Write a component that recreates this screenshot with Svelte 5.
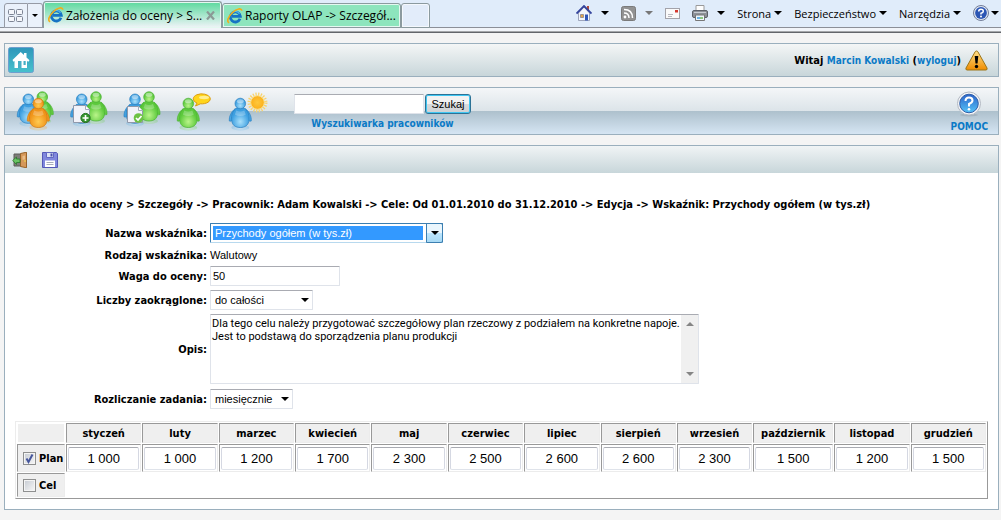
<script>
	const months = [
		{ name: 'styczeń', value: '1 000' },
		{ name: 'luty', value: '1 000' },
		{ name: 'marzec', value: '1 200' },
		{ name: 'kwiecień', value: '1 700' },
		{ name: 'maj', value: '2 300' },
		{ name: 'czerwiec', value: '2 500' },
		{ name: 'lipiec', value: '2 600' },
		{ name: 'sierpień', value: '2 600' },
		{ name: 'wrzesień', value: '2 300' },
		{ name: 'październik', value: '1 500' },
		{ name: 'listopad', value: '1 200' },
		{ name: 'grudzień', value: '1 500' }
	];

	let plan = months.map((month) => month.value);
	let weight = '50';
	let planChecked = true;
	let goalChecked = false;
	let search = '';
	let description =
		'Dla tego celu należy przygotować szczegółowy plan rzeczowy z podziałem na konkretne napoje.\nJest to podstawą do sporządzenia planu produkcji';
</script>

<svelte:head>
	<title>Założenia do oceny</title>
</svelte:head>

{#snippet arrow()}
	<svg class="arrow" width="8" height="4" viewBox="0 0 8 4"><path d="M0 0h8L4 4z" fill="currentColor" /></svg>
{/snippet}

{#snippet ie()}
	<svg width="16" height="16" viewBox="0 0 16 16">
		<path d="M13 10.800A5 5 0 1 1 13.300 8.300H5" fill="none" stroke="#1673c4" stroke-width="2.800" />
		<path d="M4 5.800a5 5 0 0 1 8.500 0" fill="none" stroke="#58bdf0" stroke-width="1.200" />
		<path d="M2.200 14.800C-.8 14 1.200 8.500 5.500 4.500S14.600-.2 14.800 2.800" fill="none" stroke="#f0ae1c" stroke-width="1.700" />
	</svg>
{/snippet}

{#snippet person(x, y, color)}
	<g transform="translate({x} {y})">
		<ellipse cx="0" cy="24" rx="9" ry="3" fill="url(#{color})" opacity="0.25" />
		<path d="M-5 5C-9 8-11.500 13-11 17.500q1.600 1 3-1L-5 9zM5 5c4 3 6.500 8 6 12.500q-1.600 1-3-1L5 9z" fill="url(#{color})" stroke="url(#{color}-edge)" stroke-width="0.6" />
		<path d="M-4 4.500C-8.500 9-9 12-8.700 16-8.500 22-4.500 24 0 24s8.500-2 8.700-8C9 12 8.500 9 4 4.500z" fill="url(#{color})" stroke="url(#{color}-edge)" stroke-width="0.7" />
		<circle r="5.300" fill="url(#{color})" stroke="url(#{color}-edge)" stroke-width="0.7" />
		<ellipse cx="0" cy="-2.200" rx="3.400" ry="2" fill="#fff" opacity="0.45" />
		<path d="M-4 7q4 2 8 0l1.500 4q-5.500 3-11 0z" fill="#fff" opacity="0.25" />
	</g>
{/snippet}

<svg class="defs" width="0" height="0" aria-hidden="true">
	<defs>
		<radialGradient id="blue" cy="0.7"><stop offset="0" stop-color="#a9e0fb" /><stop offset="1" stop-color="#3d9fe0" /></radialGradient>
		<linearGradient id="blue-edge"><stop stop-color="#2a7fc0" /></linearGradient>
		<radialGradient id="green" cy="0.7"><stop offset="0" stop-color="#baf48a" /><stop offset="1" stop-color="#5cc93c" /></radialGradient>
		<linearGradient id="green-edge"><stop stop-color="#4cb035" /></linearGradient>
		<radialGradient id="orange" cy="0.7"><stop offset="0" stop-color="#ffcb52" /><stop offset="1" stop-color="#f0941a" /></radialGradient>
		<linearGradient id="orange-edge"><stop stop-color="#cf7912" /></linearGradient>
		<linearGradient id="gold" x2="0" y2="1"><stop stop-color="#ffe08a" /><stop offset="1" stop-color="#f08c00" /></linearGradient>
		<radialGradient id="sun"><stop offset="0" stop-color="#ffc83c" /><stop offset="1" stop-color="#fbb01c" /></radialGradient>
		<linearGradient id="glass" x2="0" y2="1"><stop stop-color="#2b62c8" /><stop offset="1" stop-color="#55c4f8" /></linearGradient>
		<linearGradient id="tile" x2="0" y2="1"><stop stop-color="#2e96ba" /><stop offset="1" stop-color="#48c1cd" /></linearGradient>
	</defs>
</svg>

<header class="browser">
	<div class="tabs">
		<button type="button" class="quick" aria-label="Szybkie karty">
			<svg width="16" height="14" viewBox="0 0 16 14"><g fill="#f4f6fb" stroke="#7d8494"><rect x=".5" y=".5" width="6" height="5" rx="1" /><rect x="8.500" y=".5" width="6" height="5" rx="1" /><rect x=".5" y="7.500" width="6" height="5" rx="1" /><rect x="8.500" y="7.500" width="6" height="5" rx="1" /></g></svg>
		</button>
		<button type="button" class="quick list" aria-label="Lista kart">
			<svg width="6" height="3" viewBox="0 0 6 3"><path d="M0 0h6L3 3z" /></svg>
		</button>
		<button type="button" class="tab active">
			{@render ie()}
			<span>Założenia do oceny > S...</span>
			<svg class="close" width="9" height="9" viewBox="0 0 9 9"><path d="M1 .5l7 8M8 .5l-7 8" stroke="#8b9a96" stroke-width="2.200" /></svg>
		</button>
		<button type="button" class="tab">
			{@render ie()}
			<span>Raporty OLAP -> Szczegół...</span>
		</button>
		<button type="button" class="tab new" aria-label="Nowa karta"></button>
	</div>

	<nav class="commands">
		<button type="button" class="icon-cmd" aria-label="Strona główna">
			<svg width="16" height="16" viewBox="0 0 16 16">
				<path d="M11 1h2v5h-2z" fill="#b2493c" />
				<path d="M2.500 8L8 2l5.500 6v7.500h-11z" fill="#f3f5fb" stroke="#8a92ac" stroke-width=".8" />
				<path d="M.5 8.500L8 1l7.500 7.500" fill="none" stroke="#33439c" stroke-width="1.800" />
				<path d="M9 9.500h3v6H9z" fill="#2e55b8" /><path d="M4.500 9.500h3v3h-3z" fill="#e2a44b" stroke="#6b6b80" stroke-width=".6" />
			</svg>
			{@render arrow()}
		</button>
		<button type="button" class="icon-cmd muted" aria-label="Kanały">
			<svg width="15" height="15" viewBox="0 0 15 15">
				<rect x=".5" y=".5" width="14" height="14" rx="2" fill="#929292" stroke="#7a7a7a" />
				<circle cx="4" cy="11" r="1.400" fill="#fff" /><path d="M3 7q5 0 5 5M3 3.500q8.500 0 8.500 8.500" fill="none" stroke="#fff" stroke-width="1.500" />
			</svg>
			{@render arrow()}
		</button>
		<button type="button" class="icon-cmd" aria-label="Poczta">
			<svg width="15" height="11" viewBox="0 0 15 11">
				<rect x=".5" y=".5" width="14" height="10" fill="#fafafa" stroke="#a3a3aa" />
				<path d="M10 2h3v2.500h-3z" fill="#d4382f" /><path d="M3 6.500h5M3 8.500h4" stroke="#b9b9c0" />
			</svg>
		</button>
		<button type="button" class="icon-cmd" aria-label="Drukuj">
			<svg width="16" height="16" viewBox="0 0 16 16">
				<path d="M4 .5h8V7H4z" fill="#fdfdfd" stroke="#9a9a9a" />
				<rect x=".5" y="5.500" width="15" height="7" rx="1.500" fill="#8d9198" stroke="#5c6068" />
				<path d="M2 7.500h12" stroke="#c8ccd2" /><path d="M3.500 10h9v5.500h-9z" fill="#eef6fb" stroke="#777" />
				<path d="M5 13h3" stroke="#3e9ad8" stroke-width="1.500" /><path d="M8 13h3" stroke="#6ab75a" stroke-width="1.500" />
			</svg>
			{@render arrow()}
		</button>
		<button type="button">Strona {@render arrow()}</button>
		<button type="button">Bezpieczeństwo {@render arrow()}</button>
		<button type="button">Narzędzia {@render arrow()}</button>
		<button type="button" class="help-cmd" aria-label="Pomoc">
			<svg width="16" height="16" viewBox="0 0 16 16">
				<circle cx="8" cy="8" r="7.500" fill="#dfe6f2" stroke="#727d98" /><circle cx="8" cy="8" r="5.900" fill="#2c56b4" />
				<path d="M5.700 6.500q0-2.300 2.300-2.300t2.300 2Q10.300 7.600 8 8.300V9.600" fill="none" stroke="#fff" stroke-width="1.500" /><circle cx="8" cy="11.600" r="1" fill="#fff" />
			</svg>
			{@render arrow()}
		</button>
	</nav>
</header>

<main>
	<div class="bar welcome">
		<a href="#home" aria-label="Start">
			<svg width="26" height="26" viewBox="0 0 26 26">
				<rect x=".5" y=".5" width="25" height="25" rx="2" fill="url(#tile)" stroke="#6d9fce" />
				<path d="M4.500 13L12.700 5l3.300 3V6h2.500v4.500l3 2.800-1.200 1.500-1.300-.8v7H6.500v-7l-1 .8z" fill="#fff" />
				<path d="M10 14h3.500v7H10zM15.500 14h2.200v4h-2.200z" fill="#46afc6" />
			</svg>
		</a>
		<p>
			<span>Witaj <a href="#profil">Marcin Kowalski</a> (<a href="#wyloguj">wyloguj</a>)</span>
			<svg width="23" height="21" viewBox="0 0 23 21">
				<path d="M11.500 1Q12.500 1 13 2l9 16q.7 1.800-1 2H2q-1.700-.2-1-2L10 2q.5-1 1.500-1z" fill="url(#gold)" stroke="#9c7416" />
				<path d="M9.700 6h3.600l-.8 7.500h-2z" /><circle cx="11.500" cy="16.500" r="1.700" />
			</svg>
		</p>
	</div>

	<div class="bar tools">
		<div class="people">
			<button type="button" aria-label="Zespół">
				<svg width="40" height="40" viewBox="0 0 40 40">
					{@render person(26.3, 6, 'green')}
					{@render person(12.3, 8.3, 'blue')}
					{@render person(22.3, 12.5, 'orange')}
				</svg>
			</button>
			<button type="button" aria-label="Nowa ocena">
				<svg width="40" height="40" viewBox="0 0 40 40">
					{@render person(12.7, 8.3, 'blue')}
					{@render person(27, 6, 'green')}
					<path d="M4.500 14.500h12l4 4v13h-16z" fill="#f1f2f9" stroke="#8f98aa" /><path d="M16.500 14.500v4h4" fill="#fff" stroke="#a4abbb" />
					<circle cx="16.500" cy="27" r="4.600" fill="#35942f" stroke="#1f701f" /><path d="M13.500 27h6M16.500 24v6" stroke="#fff" stroke-width="1.600" />
				</svg>
			</button>
			<button type="button" aria-label="Oceny zatwierdzone">
				<svg width="40" height="40" viewBox="0 0 40 40">
					{@render person(13, 8.3, 'blue')}
					{@render person(27, 6, 'green')}
					<path d="M5.500 15.500h11l4 4v12h-15z" fill="#f1f2f9" stroke="#8f98aa" /><path d="M16.500 15.500v4h4" fill="#fff" stroke="#a4abbb" />
					<circle cx="16.500" cy="27" r="4.800" fill="#6dc244" /><path d="M14 27l2 2 3.500-4" fill="none" stroke="#fff" stroke-width="1.700" />
				</svg>
			</button>
			<button type="button" aria-label="Komentarze">
				<svg width="40" height="40" viewBox="0 0 40 40">
					{@render person(13.3, 12.5, 'green')}
					<path d="M22 12l-1.500 3 5-2.200a8.500 5 0 1 0-3.500-.8z" fill="#ffd51b" stroke="#dc9c12" /><ellipse cx="29" cy="6.500" rx="5" ry="1.700" fill="#ffee91" />
				</svg>
			</button>
			<button type="button" aria-label="Urlopy">
				<svg width="40" height="40" viewBox="0 0 40 40">
					{@render person(12.3, 12.5, 'blue')}
					<circle cx="29.500" cy="11.500" r="8.200" fill="none" stroke="#f8d36c" stroke-width="3.500" stroke-dasharray="1.200 1.400" />
					<circle cx="29.500" cy="11.500" r="6.800" fill="url(#sun)" stroke="#fbe08a" />
				</svg>
			</button>
		</div>

		<form class="search" on:submit|preventDefault>
			<div>
				<input type="text" id="search" aria-label="Wyszukiwarka pracowników" bind:value={search} />
				<button type="submit">Szukaj</button>
			</div>
			<a href="#szukaj">Wyszukiwarka pracowników</a>
		</form>

		<a class="help" href="#pomoc">
			<svg width="26" height="26" viewBox="0 0 26 26">
				<ellipse cx="13" cy="24" rx="9" ry="1.500" fill="#8b9aa6" opacity=".4" />
				<circle cx="13" cy="12.500" r="11.500" fill="#f5f6f8" stroke="#b2b8c2" /><circle cx="13" cy="12.500" r="9.300" fill="url(#glass)" stroke="#2d5da8" />
				<path d="M9.500 10q0-3.500 3.500-3.500t3.500 3Q16.500 11.500 13 13v2.500" fill="none" stroke="#fff" stroke-width="2" /><circle cx="13" cy="18.300" r="1.300" fill="#fff" />
			</svg>
			POMOC
		</a>
	</div>

	<section class="panel">
		<div class="actions">
			<button type="button" aria-label="Wyjdź">
				<svg width="16" height="16" viewBox="0 0 16 16">
					<path d="M2 2h8v12H2z" fill="#7d7d78" stroke="#5c5c58" />
					<path d="M8.500 1.500l6-1.300v15.600l-6-1.300z" fill="#d5985a" stroke="#986329" /><path d="M10.500 4l2.500-.5v4l-2.500.3z" fill="#e8bd88" /><circle cx="13" cy="9" r=".8" fill="#f8e34b" />
					<path d="M.7 8.500L4.500 5v2H8v3.500H4.500v2z" fill="#69c463" stroke="#28782b" stroke-width=".8" />
				</svg>
			</button>
			<button type="button" aria-label="Zapisz">
				<svg width="16" height="16" viewBox="0 0 16 16">
					<path d="M.5.500h14l1 1v14H.5z" fill="#8088dd" stroke="#5459b7" />
					<path d="M4.500.5h7v5h-7z" fill="#dce3f6" stroke="#6268c2" /><path d="M8.500 1.500h2v3h-2z" fill="#4a50ac" />
					<path d="M3 8.500h10v6.500H3z" fill="#fff" /><path d="M4.500 10.500h7M4.500 12.500h7" stroke="#a6abb9" />
				</svg>
			</button>
		</div>

		<div class="content">
			<h1>Założenia do oceny > Szczegóły -> Pracownik: Adam Kowalski -> Cele: Od 01.01.2010 do 31.12.2010 -> Edycja -> Wskaźnik: Przychody ogółem (w tys.zł)</h1>

			<form class="fields" on:submit|preventDefault>
				<label for="name">Nazwa wskaźnika:</label>
				<span class="select current">
					<select id="name"><option>Przychody ogółem (w tys.zł)</option></select>
					<span class="drop">{@render arrow()}</span>
				</span>

				<span class="label">Rodzaj wskaźnika:</span>
				<span class="value">Walutowy</span>

				<label for="weight">Waga do oceny:</label>
				<input type="text" id="weight" bind:value={weight} />

				<label for="rounding">Liczby zaokrąglone:</label>
				<span class="select rounding">
					<select id="rounding"><option>do całości</option></select>
					<span class="drop">{@render arrow()}</span>
				</span>

				<label for="description">Opis:</label>
				<div class="description">
					<textarea id="description" bind:value={description}></textarea>
					<div class="scroll">
						<svg width="8" height="4" viewBox="0 0 8 4"><path d="M0 4h8L4 0z" fill="#858585" /></svg>
						<svg width="8" height="4" viewBox="0 0 8 4"><path d="M0 0h8L4 4z" fill="#858585" /></svg>
					</div>
				</div>

				<label for="period">Rozliczanie zadania:</label>
				<span class="select period">
					<select id="period"><option>miesięcznie</option></select>
					<span class="drop">{@render arrow()}</span>
				</span>
			</form>

			<table>
				<colgroup>
					<col class="first" />
					{#each months as month}
						<col class:wide={month.name.length > 10} />
					{/each}
				</colgroup>
				<thead>
					<tr>
						<td class="corner"></td>
						{#each months as month}
							<th>{month.name}</th>
						{/each}
					</tr>
				</thead>
				<tbody>
					<tr class="plan">
						<th>
							<label>
								<span class="check">
									<input type="checkbox" bind:checked={planChecked} />
									{#if planChecked}
										<svg width="13" height="13" viewBox="0 0 13 13"><path d="M3.500 6.500l2 3.500 4-7.500" fill="none" stroke="#46569c" stroke-width="2" /></svg>
									{/if}
								</span>
								Plan
							</label>
						</th>
						{#each months as month, i}
							<td><input type="text" aria-label="Plan {month.name}" bind:value={plan[i]} /></td>
						{/each}
					</tr>
					<tr class="goal">
						<th>
							<label>
								<span class="check"><input type="checkbox" bind:checked={goalChecked} /></span>
								Cel
							</label>
						</th>
					</tr>
				</tbody>
			</table>
		</div>
	</section>
</main>

<style>
	:global(body) {
		margin: 0;
		background: #f4f4f4;
		color: #000;
		font-family: 'DejaVu Sans Condensed', 'DejaVu Sans', sans-serif;
		font-size: 11px;
	}

	* {
		box-sizing: border-box;
	}

	svg {
		display: block;
		flex: none;
	}

	button {
		margin: 0;
		padding: 0;
		border: 0;
		background: none;
		color: #000;
	}

	a {
		color: #0b7ac6;
		font-size: 10px;
		font-weight: bold;
		text-decoration: none;
	}

	.defs {
		position: absolute;
	}

	/* browser tabs */
	.browser {
		display: flex;
		justify-content: space-between;
		height: 33px;
		padding: 0 2px 4px 4px;
		border-bottom: 1px solid #63666b;
		background: linear-gradient(#e0ecfa 27px, #8b8f98 27px, #8b8f98 28px, #f1f4f9 28px, #f1f4f9 31px, #a5a7aa 31px);
	}

	.browser button {
		font-family: 'Open Sans', sans-serif;
		font-size: 11px;
	}

	.tabs {
		display: flex;
		align-items: flex-end;
		height: 28px;
	}

	.quick {
		display: grid;
		place-items: center;
		width: 24px;
		height: 25px;
		border: 1px solid #969ba6;
		border-radius: 3px 0 0 0;
		background: #eaf1fb;
	}

	.quick.list {
		width: 15px;
		border-left: 0;
		border-radius: 0 3px 0 0;
	}

	.browser .tab {
		display: flex;
		align-items: center;
		gap: 2px;
		width: 179px;
		height: 25px;
		padding: 0 4px;
		border: 1px solid #8b9a9f;
		border-radius: 3px 3px 0 0;
		background: #8de5bd;
		box-shadow: inset 0 0 0 1px #e4f8f0;
		font-size: 12px;
		white-space: nowrap;
	}

	.browser .tab.active {
		height: 27px;
		border-bottom: 0;
		background: linear-gradient(#5bd99e, #f1f4f9);
	}

	.browser .tab.new {
		width: 29px;
		background: #e2ecfa;
		box-shadow: inset 0 0 0 1px #f4f8fd;
	}

	.close {
		margin-left: auto;
		margin-right: 2px;
	}

	.commands {
		display: flex;
		align-items: center;
		gap: 12px;
		height: 26px;
	}

	.commands button {
		display: flex;
		align-items: center;
		gap: 3px;
		white-space: nowrap;
	}

	.commands .icon-cmd {
		gap: 9px;
	}

	.commands .help-cmd {
		gap: 2px;
	}

	.muted .arrow {
		color: #777;
	}

	/* application bars */
	main {
		display: flex;
		flex-direction: column;
		gap: 10px;
		padding: 10px 2px 10px 4px;
	}

	.bar,
	.panel {
		border: 1px solid #9aafbd;
	}

	.bar {
		display: flex;
		align-items: center;
	}

	.welcome {
		justify-content: space-between;
		height: 34px;
		padding: 0 10px 0 3px;
		background: linear-gradient(#f4f6f6, #c8d6da);
	}

	.welcome p {
		display: flex;
		align-items: center;
		gap: 4px;
		margin: 0;
		font-weight: bold;
	}

	.tools {
		height: 48px;
		padding: 0 10px 0 11px;
		background: linear-gradient(#f4f6f8, #dce4e9 50%, #adc0cc 50%, #d5e5f3);
	}

	.people {
		display: flex;
		gap: 13px;
	}

	.people button {
		width: 40px;
	}

	.search {
		display: flex;
		flex-direction: column;
		align-items: center;
		gap: 4px;
		margin-left: 26px;
	}

	.search div {
		display: flex;
		gap: 1px;
	}

	input,
	select,
	.search button {
		height: 20px;
		font-family: 'Liberation Sans', Arial, sans-serif;
		font-size: 11px;
	}

	input,
	select,
	.description {
		border: 1px solid #dfe3ea;
		border-top-color: #a9abb2;
		border-radius: 1px;
		background: #fff;
		color: #000;
	}

	input {
		width: 130px;
		padding: 0 2px;
	}

	.search button {
		width: 46px;
		border: 1px solid #2c7296;
		border-radius: 3px;
		background: linear-gradient(#f2f2f2 50%, #d6dadd 50%, #cfd1d3);
		box-shadow: inset 0 0 0 1px #3fc6f2;
	}

	.help {
		display: flex;
		flex-direction: column;
		align-items: center;
		gap: 4px;
		margin-left: auto;
	}

	/* edit panel */
	.panel {
		background: #fff;
	}

	.actions {
		display: flex;
		align-items: center;
		gap: 14px;
		height: 27px;
		padding: 0 7px;
		background: linear-gradient(#f0f4f5, #c8d6da);
	}

	.content {
		padding: 24px 10px 10px;
	}

	h1 {
		margin: 0 0 9px;
		font-size: 11px;
		line-height: 15px;
		white-space: nowrap;
	}

	.fields {
		display: grid;
		grid-template-columns: 192px 1fr;
		grid-template-rows: 24px 20px 22px 26px 72px 28px;
		column-gap: 3px;
		align-items: center;
		justify-items: start;
	}

	.fields label,
	.label {
		justify-self: end;
		font-weight: bold;
	}

	.value {
		font-family: 'Liberation Sans', Arial, sans-serif;
	}

	.select {
		display: grid;
	}

	.select select,
	.select .drop {
		grid-area: 1 / 1;
	}

	select {
		width: 100%;
		padding: 0 16px 0 4px;
		appearance: none;
	}

	.drop {
		display: grid;
		place-items: center;
		justify-self: end;
		width: 17px;
		pointer-events: none;
	}

	.rounding {
		width: 103px;
	}

	.period {
		width: 83px;
	}

	.current {
		width: 233px;
	}

	.current select {
		padding: 2px 19px 2px 2px;
		border-color: #3c7fb1 #3c7fb1 #b8d9ee;
		background: #39f content-box;
		color: #fff;
		text-indent: 2px;
	}

	.current .drop {
		border: 1px solid #3c7fb1;
		border-radius: 0 2px 2px 0;
		background: linear-gradient(#eaf6fd 50%, #bee6fd 50%, #a7d9f5);
	}

	.description {
		display: flex;
		width: 489px;
		height: 70px;
	}

	textarea {
		flex: 1;
		padding: 2px 1px;
		border: 0;
		outline: 0;
		overflow: hidden;
		resize: none;
		font-family: Roboto, 'Liberation Sans', sans-serif;
		font-size: 11px;
		line-height: 13px;
	}

	.scroll {
		display: flex;
		flex-direction: column;
		justify-content: space-between;
		align-items: center;
		width: 17px;
		padding: 7px 0;
		background: #f0f0f0;
	}

	/* monthly plan */
	table {
		width: 100%;
		margin-top: 8px;
		border: 1px solid;
		border-color: #ececec #999 #999 #ececec;
		border-collapse: separate;
		border-spacing: 1px;
		table-layout: fixed;
	}

	.first {
		width: 48px;
	}

	.wide {
		width: 80px;
	}

	th,
	td {
		padding: 0;
		border: 1px solid;
		border-color: #999 #ececec #ececec #999;
	}

	th {
		height: 20px;
		background: #efefef;
	}

	.corner {
		border-color: #fff;
		background: #efefef;
	}

	.plan th,
	.plan td {
		height: 28px;
	}

	.plan td {
		padding: 1px;
	}

	.plan td input {
		width: 100%;
		height: 23px;
		border-color: #a9abb2 #d5d8e2 #dfe3ea;
		border-radius: 2px;
		font-size: 13px;
		text-align: center;
	}

	.goal th {
		height: 24px;
	}

	th label {
		display: flex;
		align-items: center;
		gap: 3px;
		padding-left: 5px;
	}

	.check {
		display: grid;
	}

	.check input,
	.check svg {
		grid-area: 1 / 1;
	}

	.check svg {
		pointer-events: none;
	}

	.check input {
		width: 13px;
		height: 13px;
		margin: 0;
		padding: 0;
		border: 1px solid #8e8f8f;
		border-radius: 0;
		background: linear-gradient(135deg, #c5cad2, #f8f8f8);
		box-shadow: inset 0 0 0 1px #f4f4f4;
		appearance: none;
	}
</style>
